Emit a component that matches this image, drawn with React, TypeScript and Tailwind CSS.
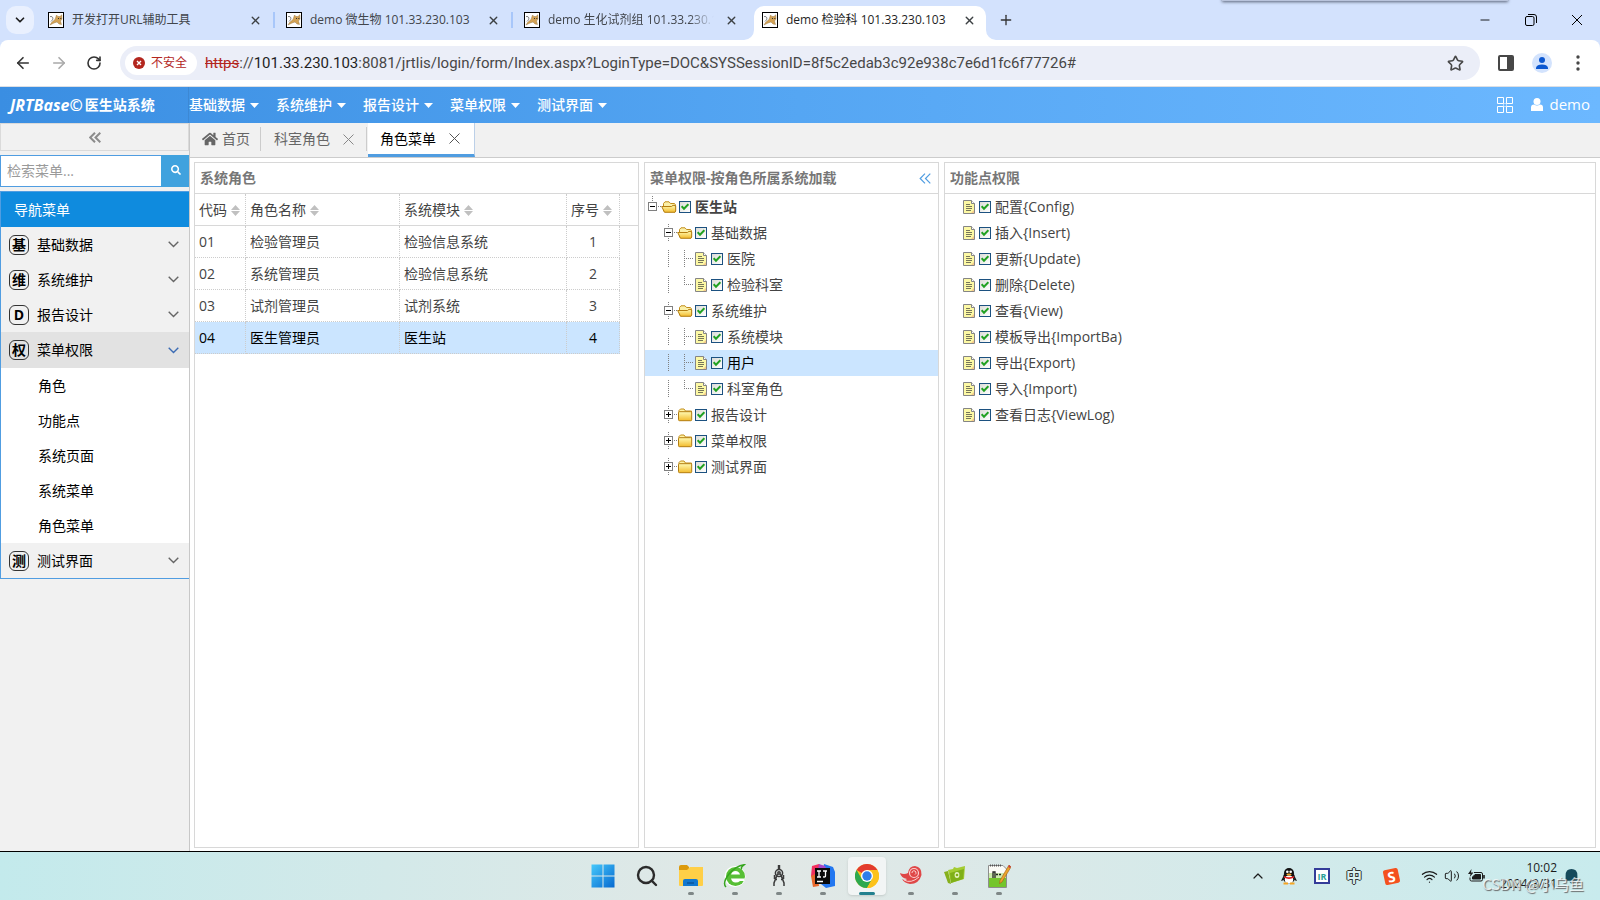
import type { ReactNode } from "react";
import { clsx } from "clsx";
import {
    ArrowLeft,
    ArrowRight,
    ChevronDown,
    ChevronUp,
    Minus,
    Plus,
    RotateCw,
    Search,
    Star,
    Volume2,
    Wifi,
    X,
} from "lucide-react";
import { FaHome, FaSearch } from "react-icons/fa";

const browserTabs = [
    { title: "开发打开URL辅助工具", active: false },
    { title: "demo 微生物 101.33.230.103", active: false },
    { title: "demo 生化试剂组 101.33.230.103", active: false },
    { title: "demo 检验科 101.33.230.103", active: true },
];

const topMenus = ["基础数据", "系统维护", "报告设计", "菜单权限", "测试界面"];

const navItems = [
    { mark: "基", text: "基础数据" },
    { mark: "维", text: "系统维护" },
    { mark: "D", text: "报告设计" },
    { mark: "权", text: "菜单权限", children: ["角色", "功能点", "系统页面", "系统菜单", "角色菜单"] },
    { mark: "测", text: "测试界面" },
];

const roles = [
    { code: "01", name: "检验管理员", system: "检验信息系统", seq: 1 },
    { code: "02", name: "系统管理员", system: "检验信息系统", seq: 2 },
    { code: "03", name: "试剂管理员", system: "试剂系统", seq: 3 },
    { code: "04", name: "医生管理员", system: "医生站", seq: 4 },
];

type Slot = "blank" | "line" | "join" | "end" | "minus" | "plus" | "root";

type TreeRow = {
    text: string;
    slots: Slot[];
    icon: "open" | "closed" | "file";
    bold?: boolean;
    selected?: boolean;
};

const menuTree: TreeRow[] = [
    { text: "医生站", slots: ["root"], icon: "open", bold: true },
    { text: "基础数据", slots: ["blank", "minus"], icon: "open" },
    { text: "医院", slots: ["blank", "line", "join"], icon: "file" },
    { text: "检验科室", slots: ["blank", "line", "end"], icon: "file" },
    { text: "系统维护", slots: ["blank", "minus"], icon: "open" },
    { text: "系统模块", slots: ["blank", "line", "join"], icon: "file" },
    { text: "用户", slots: ["blank", "line", "join"], icon: "file", selected: true },
    { text: "科室角色", slots: ["blank", "line", "end"], icon: "file" },
    { text: "报告设计", slots: ["blank", "plus"], icon: "closed" },
    { text: "菜单权限", slots: ["blank", "plus"], icon: "closed" },
    { text: "测试界面", slots: ["blank", "plus"], icon: "closed" },
];

const functionTree: TreeRow[] = [
    "配置{Config)",
    "插入{Insert)",
    "更新{Update)",
    "删除{Delete)",
    "查看{View)",
    "模板导出{ImportBa)",
    "导出{Export)",
    "导入{Import)",
    "查看日志{ViewLog)",
].map((text) => ({ text, slots: ["blank"], icon: "file" }));

const CatIcon = () => (
    <svg width="16" height="16" viewBox="0 0 16 16" className="shrink-0">
        <rect x="0.5" y="0.5" width="15" height="15" fill="#fff" stroke="#000" />
        <path d="M2 4.5 Q4.5 4 5 6 Q5 8 3 9.5" fill="none" stroke="#666" strokeWidth="0.8" />
        <path d="M8.5 3 L10 4.5 L12 4.5 L13.8 2.8 L14 7 L12.5 9 L13.5 12.5 L11 12 L9 10 L6 11 L2 13 L3.5 10.5 L7 7.5 Z" fill="#d3a255" stroke="#8a6d3a" strokeWidth="0.4" />
        <path d="M10 6.5 h1 M12.3 6.5 h1" stroke="#333" />
    </svg>
);

const BrowserTabs = () => (
    <div className="relative flex h-10 items-end bg-[#d3e2fd] text-xs text-[#41454b]">
        <div className="absolute -top-3 left-[1222px] h-[13px] w-[286px] bg-[#b9c4dc] shadow-[0_1px_3px_#5b6478]"></div>
        <button aria-label="搜索标签页" className="mb-[6px] ml-[6px] flex h-7 w-7 shrink-0 items-center justify-center rounded-[10px] bg-[#e9f0fe] text-[#1f1f1f]">
            <ChevronDown size={14} strokeWidth={3} />
        </button>
        <div className="ml-[6px] flex">
            {browserTabs.map((tab, i) => (
                <div
                    key={tab.title}
                    className={clsx(
                        "relative flex h-[34px] items-center pb-[6px] pl-2",
                        tab.active ? "w-[232px] rounded-t-[10px] bg-white pr-[7px] text-[#1f1f1f]" : "w-[238px] pr-[3px]"
                    )}
                >
                    <CatIcon />
                    <span className={clsx("ml-2 w-[166px] overflow-hidden whitespace-nowrap", i === 2 && "mask-r-from-85%")}>{tab.title}</span>
                    <button aria-label="关闭标签页" className="ml-auto flex w-5 justify-center">
                        <X size={13} strokeWidth={2.5} className="text-[#3c4043]" />
                    </button>
                    {!tab.active && <span className={clsx("ml-2 h-4 w-[2px]", i < 2 && "bg-[#a8c7fa]")}></span>}
                    {tab.active && (
                        <>
                            <svg width="10" height="10" className="absolute bottom-0 -left-[10px]"><path d="M10 0 V10 H0 A10 10 0 0 0 10 0" fill="#fff" /></svg>
                            <svg width="10" height="10" className="absolute -right-[10px] bottom-0"><path d="M0 0 V10 H10 A10 10 0 0 1 0 0" fill="#fff" /></svg>
                        </>
                    )}
                </div>
            ))}
        </div>
        <button aria-label="新标签页" className="mb-3 ml-3 text-[#333]">
            <Plus size={16} strokeWidth={2} />
        </button>
        <div className="ml-auto flex h-10 items-center text-black">
            <button aria-label="最小化" className="flex w-[46px] justify-center"><Minus size={14} strokeWidth={1.5} /></button>
            <button aria-label="还原" className="flex w-[46px] justify-center">
                <svg width="12" height="12" viewBox="0 0 12 12" fill="none" stroke="black">
                    <rect x="0.5" y="2.5" width="8.5" height="9" rx="1.5" />
                    <path d="M3 .5 H9 Q11.5 .5 11.5 3 V9" />
                </svg>
            </button>
            <button aria-label="关闭" className="flex w-[46px] justify-center">
                <svg width="12" height="12" viewBox="0 0 12 12" stroke="black"><path d="M1 1 L11 11 M11 1 L1 11" /></svg>
            </button>
        </div>
    </div>
);

const AddressBar = () => (
    <div className="bg-[#d3e2fd]">
        <div className="flex h-[47px] items-center rounded-t-lg border-b border-[#dcdfe4] bg-white pr-3 text-[#474747]">
            <button aria-label="后退" className="ml-[14px]"><ArrowLeft size={18} strokeWidth={2.2} className="text-[#333]" /></button>
            <button aria-label="前进" className="ml-[18px]"><ArrowRight size={18} strokeWidth={2.2} className="text-[#a9a9a9]" /></button>
            <button aria-label="重新加载" className="ml-[18px]"><RotateCw size={16} strokeWidth={2.4} className="text-[#333]" /></button>
            <div className="ml-[18px] flex h-[34px] flex-1 items-center rounded-full bg-[#ebeef8] pr-4 pl-[5px]">
                <button className="flex h-6 items-center rounded-full bg-white pr-[10px] pl-2 text-xs text-[#b3261e]">
                    <svg width="12" height="12" viewBox="0 0 12 12" className="mr-[6px]">
                        <circle cx="6" cy="6" r="6" fill="#b3261e" />
                        <path d="M4 4 L8 8 M8 4 L4 8" stroke="white" strokeWidth="1.4" />
                    </svg>
                    不安全
                </button>
                <div className="ml-2 flex-1 font-[Roboto,sans-serif] text-[15px] whitespace-nowrap">
                    <span className="text-[#b3261e] line-through">https</span>
                    <span>://</span>
                    <span className="text-[#1f1f1f]">101.33.230.103</span>
                    <span>:8081/jrtlis/login/form/Index.aspx?LoginType=DOC&amp;SYSSessionID=8f5c2edab3c92e938c7e6d1fc6f77726#</span>
                </div>
                <button aria-label="收藏"><Star size={17} strokeWidth={2.3} strokeLinejoin="miter" /></button>
            </div>
            <button aria-label="侧边栏" className="ml-[18px]">
                <svg width="16" height="16" viewBox="0 0 16 16">
                    <rect x="1" y="1" width="14" height="14" rx="1" fill="none" stroke="#474747" strokeWidth="2" />
                    <path d="M9 1 h6 v14 h-6z" fill="#474747" />
                </svg>
            </button>
            <button aria-label="用户资料" className="ml-[18px]">
                <svg width="20" height="20" viewBox="0 0 20 20">
                    <circle cx="10" cy="10" r="10" fill="#d3e3fd" />
                    <circle cx="10" cy="7" r="3" fill="#0b57d0" />
                    <path d="M4 16 V14.5 Q5 11.5 10 11.5 Q15 11.5 16 14.5 V16z" fill="#0b57d0" />
                </svg>
            </button>
            <button aria-label="菜单" className="ml-4 flex w-5 justify-center">
                <svg width="4" height="16" viewBox="0 0 4 16" fill="#474747">
                    <circle cx="2" cy="2" r="1.7" /><circle cx="2" cy="8" r="1.7" /><circle cx="2" cy="14" r="1.7" />
                </svg>
            </button>
        </div>
    </div>
);

const AppHeader = () => (
    <header className="flex h-9 items-center bg-linear-to-r from-[#3a8ee2] via-[#55a6f3] to-[#6cb8ff] text-sm text-white">
        <div className="flex h-9 w-[189px] shrink-0 items-center border-r border-[#3c88d4] pl-[10px] font-bold">
            <span className="mr-[2px] text-base italic">JRTBase©</span>
            <span>医生站系统</span>
        </div>
        <nav className="flex gap-[17px] font-medium">
            {topMenus.map((menu) => (
                <a key={menu} href="#" className="flex w-[70px] items-center justify-between">
                    {menu}
                    <svg width="9" height="5" viewBox="0 0 9 5" fill="white"><path d="M0 0 H9 L4.5 5z" /></svg>
                </a>
            ))}
        </nav>
        <div className="ml-auto flex items-center pr-[10px]">
            <button aria-label="应用">
                <svg width="16" height="16" viewBox="0 0 16 16" fill="none" stroke="white">
                    <path d="M.5 .5 h6 v6 h-6z M9.5 .5 h6 v6 h-6z M.5 9.5 h6 v6 h-6z M9.5 9.5 h6 v6 h-6z" />
                    <path d="M6.5 6.5 h3 v3 h-3z" strokeOpacity="0.5" />
                </svg>
            </button>
            <a href="#" className="ml-[18px] flex items-center text-[15px] font-medium">
                <svg width="12" height="13" viewBox="0 0 12 13" fill="white" className="mr-[6px]">
                    <circle cx="6" cy="3.5" r="3.5" />
                    <path d="M0 13 V9.5 Q0 6.5 3 6.5 Q6 8.5 9 6.5 Q12 6.5 12 9.5 V13z" />
                </svg>
                demo
            </a>
        </div>
    </header>
);

const DoubleLeft = ({ className, width }: { className: string; width: number }) => (
    <svg width="12" height="11" viewBox="0 0 12 11" fill="none" stroke="currentColor" strokeWidth={width} className={className}>
        <path d="M6 .7 L1.2 5.5 L6 10.3 M11.3 .7 L6.5 5.5 L11.3 10.3" />
    </svg>
);

const Sidebar = () => (
    <aside className="w-[190px] shrink-0 border-r border-[#c8c8c8] bg-[#f1f1f1] text-sm text-black">
        <button aria-label="收起" className="flex h-7 w-full items-center justify-center border border-[#dadada]">
            <DoubleLeft className="text-[#8c8c8c]" width={2} />
        </button>
        <form className="mt-1 flex h-8">
            <input type="text" aria-label="检索菜单" placeholder="检索菜单..." className="min-w-0 flex-1 border border-r-0 border-[#509de1] bg-white px-[6px] outline-none placeholder:text-[#9a9a9a]" />
            <button type="button" aria-label="搜索" className="flex w-7 items-center justify-center bg-[#40a2de] pb-[2px] pl-[2px] text-white">
                <FaSearch size={10} />
            </button>
        </form>
        <nav className="mt-1 border-b border-l border-[#509de1]">
            <h2 className="flex h-9 items-center border-t border-[#509de1] bg-[#0f8bde] pl-[13px] text-white">导航菜单</h2>
            {navItems.map((item) => (
                <div key={item.text}>
                    <button className={clsx("flex w-full items-center pr-[10px] pl-2", item.children ? "h-9 bg-[#e2e2e2]" : "h-[35px]")}>
                        <span className="mr-2 flex h-5 w-5 items-center justify-center rounded-md border border-[#333] font-bold leading-none">{item.mark}</span>
                        {item.text}
                        <svg width="11" height="7" viewBox="0 0 11 7" fill="none" stroke={item.children ? "#3c6cb4" : "#666"} strokeWidth="1.4" className="ml-auto">
                            <path d="M.7 .8 L5.5 5.6 L10.3 .8" />
                        </svg>
                    </button>
                    {item.children && (
                        <ul className="bg-white">
                            {item.children.map((child) => (
                                <li key={child}><a href="#" className="flex h-[35px] items-center pl-[37px]">{child}</a></li>
                            ))}
                        </ul>
                    )}
                </div>
            ))}
        </nav>
    </aside>
);

const CloseMark = () => (
    <svg width="11" height="11" viewBox="0 0 11 11" stroke="currentColor"><path d="M.5 .5 L10.5 10.5 M10.5 .5 L.5 10.5" /></svg>
);

const PageTabs = () => (
    <div className="flex h-[35px] border-b border-[#cccccc] bg-[#f1f1f1] text-sm text-[#666]">
        <button className="mt-1 mb-[6px] flex items-center border-r border-[#cccccc] pr-[10px] pl-3">
            <FaHome size={16} className="mr-1" />首页
        </button>
        <div className="mt-1 mb-[6px] flex items-center border-r border-[#cccccc] pr-3 pl-[13px]">
            <button>科室角色</button>
            <button aria-label="关闭科室角色" className="ml-[13px] text-[#888]"><CloseMark /></button>
        </div>
        <div className="ml-px flex h-[34px] items-center border-r border-b-3 border-r-[#bcd0e8] border-b-[#509de1] bg-white pr-[14px] pl-3 text-black">
            <button>角色菜单</button>
            <button aria-label="关闭角色菜单" className="ml-[13px] text-[#555]"><CloseMark /></button>
        </div>
    </div>
);

const Panel = ({ title, className, extra, children }: { title: string; className: string; extra?: ReactNode; children: ReactNode }) => (
    <section className={clsx("border border-[#d8d8d8] bg-white", className)}>
        <div className="flex h-[31px] items-center justify-between border-b border-[#d8d8d8] px-[5px]">
            <h2 className="font-bold text-[#777]">{title}</h2>
            {extra}
        </div>
        {children}
    </section>
);

const SortMark = () => (
    <svg width="9" height="11" viewBox="0 0 9 11" fill="#c0c0c0" className="ml-1 inline-block align-[-1px]">
        <path d="M0 5 L4.5 0 L9 5z M0 6 H9 L4.5 11z" />
    </svg>
);

const headCell = "border-r border-b border-dotted border-r-[#ccc] [border-bottom-style:solid] border-b-[#d8d8d8] px-1 text-left font-normal whitespace-nowrap";
const bodyCell = "border-r border-b border-dotted border-[#ccc] px-1";

const RoleTable = () => (
    <table className="w-full table-fixed border-separate border-spacing-0">
        <colgroup>
            <col className="w-[51px]" />
            <col className="w-[154px]" />
            <col className="w-[167px]" />
            <col className="w-[53px]" />
            <col />
        </colgroup>
        <thead>
            <tr className="h-8">
                <th className={headCell}>代码<SortMark /></th>
                <th className={headCell}>角色名称<SortMark /></th>
                <th className={headCell}>系统模块<SortMark /></th>
                <th className={clsx(headCell, "text-center")}>序号<SortMark /></th>
                <td className="border-b border-[#d8d8d8]"></td>
            </tr>
        </thead>
        <tbody>
            {roles.map((role) => (
                <tr key={role.code} className={clsx("h-8", role.code === "04" && "text-black [&>td:not(:last-child)]:bg-[#cbe5ff]")}>
                    <td className={bodyCell}>{role.code}</td>
                    <td className={bodyCell}>{role.name}</td>
                    <td className={bodyCell}>{role.system}</td>
                    <td className={clsx(bodyCell, "text-center")}>{role.seq}</td>
                    <td></td>
                </tr>
            ))}
        </tbody>
    </table>
);

const slotLines: Record<Slot, string> = {
    blank: "",
    line: "M7.5 4 V21",
    join: "M7.5 4 V21 M9 12.5 H16",
    end: "M7.5 4 V13 M9 12.5 H16",
    root: "M7.5 2 V8 M13 12.5 H16",
    minus: "M7.5 4 V8 M7.5 18 V22 M13 12.5 H16",
    plus: "M7.5 4 V8 M7.5 18 V22 M13 12.5 H16",
};

const TreeSlot = ({ slot }: { slot: Slot }) => (
    <svg width="16" height="26" viewBox="0 0 16 26" fill="none" className="shrink-0">
        <path d={slotLines[slot]} stroke="#808080" strokeDasharray="1 1" />
        {(slot === "root" || slot === "minus" || slot === "plus") && (
            <>
                <rect x="3.5" y="8.5" width="8" height="8" fill="white" stroke="#808080" />
                <path d="M5 12.5 H10" stroke="black" />
                {slot === "plus" && <path d="M7.5 10 V15" stroke="black" />}
            </>
        )}
    </svg>
);

const TreeIcon = ({ icon }: { icon: TreeRow["icon"] }) => {
    if (icon === "file") {
        return (
            <svg width="16" height="16" viewBox="0 0 16 16" className="shrink-0">
                <path d="M2.5 1.5 H10.5 L13.5 4.5 V14.5 H2.5z" fill="#fdf9a4" stroke="#858585" />
                <path d="M10.5 1.5 V4.5 H13.5" fill="#fff" stroke="#858585" />
                <path d="M5 5.5 h4 M5 7.5 h6 M5 9.5 h6 M5 11.5 h5" stroke="#77775a" />
                <path d="M10 14 L13 11 V14z" fill="#f5c98a" />
            </svg>
        );
    }
    return (
        <svg width="16" height="16" viewBox="0 0 16 16" className="shrink-0">
            <defs>
                <linearGradient id="folder" x1="0" y1="0" x2="0" y2="1">
                    <stop offset="0" stopColor="#fffbb4" />
                    <stop offset="1" stopColor="#f3bb2c" />
                </linearGradient>
            </defs>
            {icon === "open" ? (
                <>
                    <path d="M2.5 12 V4.5 L4 2.8 H8 L9.5 4.5 H13.5 L14.5 6 V12z" fill="#fbf0a8" stroke="#c18d1a" />
                    <path d="M.7 7.5 H10.5 L12 6.3 L14.7 6.8 V12 L14 13.3 H3.5z" fill="url(#folder)" stroke="#b37d10" />
                </>
            ) : (
                <>
                    <path d="M2 6 V3.5 L3.5 2 H7 L8.5 4 H14.5 V7" fill="#fff3a5" stroke="#c18d1a" />
                    <rect x="1.5" y="4.7" width="13.2" height="9" rx="1" fill="url(#folder)" stroke="#b37d10" />
                </>
            )}
        </svg>
    );
};

const Tree = ({ rows }: { rows: TreeRow[] }) => (
    <ul>
        {rows.map((row) => (
            <li key={row.text}>
                <label className={clsx("flex h-[26px] items-center", row.bold && "font-bold", row.selected && "bg-[#cbe5ff] text-black")}>
                    {row.slots.map((slot, i) => <TreeSlot key={i} slot={slot} />)}
                    <TreeIcon icon={row.icon} />
                    <span className="mr-[2px] grid h-4 w-4 shrink-0 place-items-center">
                        <input type="checkbox" defaultChecked className="peer col-start-1 row-start-1 h-3 w-3 appearance-none border border-[#1c5180] bg-linear-to-br from-[#dcdcd7] to-white" />
                        <svg width="8" height="8" viewBox="0 0 8 8" fill="none" stroke="#21a121" strokeWidth="2" className="pointer-events-none invisible col-start-1 row-start-1 peer-checked:visible">
                            <path d="M.7 3.2 L3 5.8 L7.4 1.2" />
                        </svg>
                    </span>
                    {row.text}
                </label>
            </li>
        ))}
    </ul>
);

const WindowsIcon = () => (
    <svg width="24" height="24" viewBox="0 0 24 24">
        <defs>
            <linearGradient id="win" x1="0" y1="0" x2="1" y2="1">
                <stop offset="0" stopColor="#45c8fb" />
                <stop offset="1" stopColor="#0669d0" />
            </linearGradient>
        </defs>
        <path d="M.5 .5 h11 v11 h-11z M12.5 .5 h11 v11 h-11z M.5 12.5 h11 v11 h-11z M12.5 12.5 h11 v11 h-11z" fill="url(#win)" />
    </svg>
);

const FolderIcon = () => (
    <svg width="24" height="24" viewBox="0 0 24 24">
        <path d="M0 3 Q0 1 2 1 H8 L10 3 V7 H0z" fill="#dc9a0c" />
        <path d="M0 6 H8 L11 3 H24 V21 Q24 22 23 22 H1 Q0 22 0 21z" fill="#ffcf47" />
        <path d="M4 22 V17 Q4 15 6 15 H17 Q19 15 19 17 V22z" fill="#1277cf" />
        <path d="M8 19 h7" stroke="#0b559c" strokeWidth="1.5" />
    </svg>
);

const GreenBrowserIcon = () => (
    <svg width="24" height="24" viewBox="0 0 24 24" fill="none">
        <circle cx="12" cy="12.5" r="10.5" fill="#fff" />
        <circle cx="12.5" cy="12.5" r="9.5" fill="#57bf35" />
        <path d="M8 10.5 Q9 7 12.5 7 Q16 7 17 10.5z" fill="#fff" />
        <path d="M8 14.5 H22 L21 17 H17 Q15.5 18.5 12.5 18.5 Q9 18.5 8 14.5z" fill="#fff" />
        <path d="M3 23 Q-1 19 6 10 Q13 2 21 0.8 Q17 4 19 5" stroke="#36a51f" strokeWidth="1.5" />
    </svg>
);

const CompassIcon = () => (
    <svg width="24" height="24" viewBox="0 0 24 24" fill="none" stroke="#3a3a3a" strokeWidth="1.5">
        <path d="M12 1 V5" strokeWidth="2.4" />
        <circle cx="12" cy="9" r="3.6" />
        <path d="M10.5 10 L7 19 V22 M13.5 10 L17 19 V22 M7.5 11 V15 M16.5 11 V15 M7.5 15.5 H10 M14 15.5 H16.5" />
        <circle cx="12" cy="9" r="1.2" />
    </svg>
);

const IdeaIcon = () => (
    <svg width="24" height="24" viewBox="0 0 24 24">
        <path d="M1 2 L8 0 L13 5 L5 15 L0 12z" fill="#f2305e" />
        <path d="M0 12 L6 9 L8 22 L2 23z" fill="#e8692c" />
        <path d="M13 0 L22 3 L24 8 V22 L15 24 L10 20z" fill="#2277f0" />
        <path d="M8 0 L14 2 L16 6 H7z" fill="#a646c8" />
        <rect x="4" y="4" width="15" height="16" fill="#0a0a0a" />
        <path d="M6 7 h4 M8 7 v6 M6 13 h4 M12 7 h4 M14.5 7 v5 q0 1.3 -2.5 .9 M6 17.5 h6" stroke="white" strokeWidth="1.3" fill="none" />
    </svg>
);

const ChromeIcon = () => (
    <svg width="24" height="24" viewBox="0 0 24 24">
        <circle cx="12" cy="12" r="12" fill="#fcc21b" />
        <path d="M12 12 L1.6 6 A12 12 0 0 1 22.4 6z" fill="#e33b2e" />
        <path d="M1.6 6 A12 12 0 0 0 12 24 L17.2 15 L6.8 15z" fill="#2da94f" />
        <path d="M12 6 H22.4 A12 12 0 0 1 12 24 L17.2 15z" fill="#fcc21b" />
        <circle cx="12" cy="12" r="6" fill="#fff" />
        <circle cx="12" cy="12" r="4.7" fill="#2f7de9" />
    </svg>
);

const ShellIcon = () => (
    <svg width="24" height="24" viewBox="0 0 24 24" fill="none">
        <path d="M1 9 Q5 11 9 9 Q10 2 16 2 Q23 3 22.5 11 Q20 20 11 20 Q5 19 3 15 Q6 17 8 15 Q2 14 1 9z" fill="#df4747" />
        <circle cx="15" cy="9" r="4.5" stroke="#fbd0d0" strokeWidth="1.2" />
        <path d="M13 9 a2 2 0 1 1 3 1.5 M5 16 Q12 20 20 13" stroke="#fbd0d0" />
    </svg>
);

const CameraIcon = () => (
    <svg width="24" height="24" viewBox="0 0 24 24">
        <path d="M1 8 L5 7 L8 20 L5 19z" fill="#86b01c" />
        <path d="M5 6 L10 5 L11 3 L14 4 L22 2 L21 15 L8 19z" fill="#a3cc32" />
        <path d="M7 9 L21 5 L20 15 L8 19z" fill="#7fb018" />
        <ellipse cx="14" cy="11" rx="2.4" ry="3" fill="#e5f2be" />
        <circle cx="14" cy="11" r="1.3" fill="#7fb018" />
    </svg>
);

const NotepadIcon = () => (
    <svg width="24" height="24" viewBox="0 0 24 24">
        <path d="M1.5 1.5 H16 L19.5 5 V23.5 H1.5z" fill="#fbfbf6" stroke="#8d8d8d" />
        <path d="M2 13 H19 V23 H2z" fill="#74c52c" />
        <path d="M2 9 H19 V14 H2z" fill="#cdebad" />
        <path d="M3 1.5 H15" stroke="#555" strokeWidth="2" strokeDasharray="1 1" />
        <path d="M6 14 V8 H8 V14 M9 10.5 h2 M12 10.5 h2" stroke="#222" strokeWidth="1.3" fill="none" />
        <path d="M22 1 L24 3 L15 18 L12.5 19.5 L13 16.5z" fill="#eba42c" stroke="#a45c16" strokeWidth="0.6" />
        <path d="M21 3 L22.2 1 L24 2.4 L23 4z" fill="#c94040" />
    </svg>
);

const taskIcons = [
    { name: "开始", icon: <WindowsIcon />, running: false },
    { name: "搜索", icon: <Search size={24} strokeWidth={2.4} className="text-[#2b2b2b]" />, running: false },
    { name: "文件资源管理器", icon: <FolderIcon />, running: true },
    { name: "浏览器", icon: <GreenBrowserIcon />, running: true },
    { name: "圆规", icon: <CompassIcon />, running: true },
    { name: "IDEA", icon: <IdeaIcon />, running: true },
    { name: "Chrome", icon: <ChromeIcon />, running: true, active: true },
    { name: "终端", icon: <ShellIcon />, running: true },
    { name: "相机", icon: <CameraIcon />, running: true },
    { name: "记事本", icon: <NotepadIcon />, running: true },
];

const PenguinIcon = () => (
    <svg width="16" height="17" viewBox="0 0 16 17">
        <ellipse cx="8" cy="9.5" rx="6" ry="6" fill="#111" />
        <circle cx="8" cy="5" r="5" fill="#111" />
        <path d="M2 9 L0 13 L3 12z M14 9 L16 13 L13 12z" fill="#111" />
        <ellipse cx="8" cy="11.5" rx="4.2" ry="4" fill="#fff" />
        <circle cx="6.3" cy="3.8" r="1.3" fill="#fff" />
        <circle cx="9.7" cy="3.8" r="1.3" fill="#fff" />
        <ellipse cx="8" cy="6.5" rx="2.6" ry="1" fill="#f5a623" />
        <path d="M3 8 Q8 10.5 13 8 L13 9.8 Q8 12 3 9.8z" fill="#e02020" />
        <path d="M2.5 15.5 h4.5 M9 15.5 h4.5" stroke="#f5a623" strokeWidth="2" />
    </svg>
);

const BatteryIcon = () => (
    <svg width="17" height="14" viewBox="0 0 17 14" fill="none" stroke="#1b1b1b">
        <path d="M6 3.5 H13 Q14.5 3.5 14.5 5 V10.5 Q14.5 12 13 12 H3.5 Q2 12 2 10.5 V8.5" />
        <path d="M4.5 10 V8 L7 5.5 H12.5 V10z" fill="#1b1b1b" />
        <path d="M16 6 V9.5" strokeWidth="1.6" />
        <path d="M3.5 0 L0 5 H2.5 L1.8 8 L5.5 3.5 H3z" fill="#1b1b1b" stroke="none" />
    </svg>
);

const Taskbar = () => (
    <footer className="relative grid h-[49px] grid-cols-[1fr_auto_1fr] border-t border-black bg-linear-to-r from-[#c3eaec] via-[#e2e8e6] via-48% to-[#c8ebed]">
        <div></div>
        <div className="flex items-center pl-[2px]">
            {taskIcons.map((task) => (
                <button
                    key={task.name}
                    aria-label={task.name}
                    className={clsx("relative mx-[3px] flex h-[38px] w-[38px] items-center justify-center rounded", task.active && "bg-[#f2f5f5] shadow-sm")}
                >
                    {task.icon}
                    {task.running && (
                        <span className={clsx("absolute bottom-0 h-[3px] rounded-full", task.active ? "w-4 bg-[#23808f]" : "w-[6px] bg-[#7f8787]")}></span>
                    )}
                </button>
            ))}
        </div>
        <div className="flex items-center justify-end pr-[22px] text-[#1b1b1b]">
            <button aria-label="显示隐藏的图标"><ChevronUp size={16} strokeWidth={1.8} /></button>
            <button aria-label="QQ" className="ml-[15px]"><PenguinIcon /></button>
            <button className="ml-[17px] flex h-4 w-4 items-center justify-center border-2 border-[#343c99] bg-white text-[9px] leading-none font-bold text-[#2aa198]">IR</button>
            <button className="ml-4 text-base leading-none font-bold text-[#d9f0f0] [text-shadow:1px_0_#333,-1px_0_#333,0_1px_#333,0_-1px_#333]">中</button>
            <button className="ml-[22px] flex h-[15px] w-[15px] -rotate-12 items-center justify-center rounded-xs bg-[#f4511e] text-sm leading-none font-bold text-white">S</button>
            <button aria-label="网络" className="ml-[22px]"><Wifi size={17} strokeWidth={1.7} /></button>
            <button aria-label="音量" className="ml-[6px]"><Volume2 size={16} strokeWidth={1.5} /></button>
            <button aria-label="电池" className="ml-2"><BatteryIcon /></button>
            <div className="ml-4 w-[56px] text-right text-xs leading-4 whitespace-nowrap">
                <div>10:02</div>
                <div className="flex justify-end">2024/3/31</div>
            </div>
            <svg width="13" height="15" viewBox="0 0 12 14" fill="#174a5b" className="ml-2">
                <path d="M6 0 Q11.5 0 11.5 6 V9 L12 11 H0 L.5 9 V6 Q.5 0 6 0z M4 12 h4 q-2 3 -4 0z" />
            </svg>
        </div>
        <span className="absolute right-4 bottom-[6px] font-['Noto_Sans_CJK_SC',sans-serif] text-[15px] leading-5 text-white/70 [text-shadow:1px_1px_1px_#666]">CSDN @小乌鱼</span>
    </footer>
);

export default function App() {
    return (
        <div className="flex min-h-screen flex-col overflow-hidden bg-white font-['Open_Sans','Noto_Sans_CJK_SC',sans-serif] leading-5">
            <BrowserTabs />
            <AddressBar />
            <AppHeader />
            <div className="flex flex-1">
                <Sidebar />
                <main className="flex min-w-0 flex-1 flex-col">
                    <PageTabs />
                    <div className="flex flex-1 gap-[5px] px-1 pt-1 pb-[3px] text-sm text-[#444]">
                        <Panel title="系统角色" className="w-[445px] shrink-0">
                            <RoleTable />
                        </Panel>
                        <Panel
                            title="菜单权限-按角色所属系统加载"
                            className="w-[295px] shrink-0"
                            extra={<button aria-label="折叠" className="mr-[2px]"><DoubleLeft className="text-[#509de1]" width={1.2} /></button>}
                        >
                            <Tree rows={menuTree} />
                        </Panel>
                        <Panel title="功能点权限" className="min-w-0 flex-1">
                            <Tree rows={functionTree} />
                        </Panel>
                    </div>
                </main>
            </div>
            <Taskbar />
        </div>
    );
}
